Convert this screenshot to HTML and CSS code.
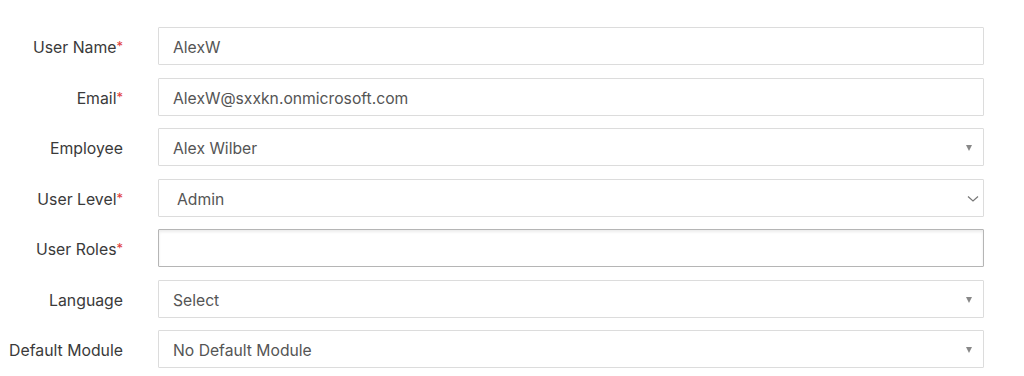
FILE: index.html
```html
<!DOCTYPE html>
<html>
<head>
<meta charset="utf-8">
<link rel="stylesheet" href="styles.css">
</head>
<body>
<form class="form">
  <div class="row">
    <label class="label">User Name<span class="req">*</span></label>
    <div class="field"><span class="value">AlexW</span></div>
  </div>
  <div class="row">
    <label class="label">Email<span class="req">*</span></label>
    <div class="field"><span class="value">AlexW@sxxkn.onmicrosoft.com</span></div>
  </div>
  <div class="row">
    <label class="label">Employee</label>
    <div class="field select"><span class="value">Alex Wilber</span><span class="caret"></span></div>
  </div>
  <div class="row">
    <label class="label">User Level<span class="req">*</span></label>
    <div class="field native"><span class="value">Admin</span>
      <svg class="chev" width="12" height="8" viewBox="0 0 12 8"><path d="M1 1.5 L6 6 L11 1.5" fill="none" stroke="#777" stroke-width="1.2"/></svg>
    </div>
  </div>
  <div class="row">
    <label class="label">User Roles<span class="req">*</span></label>
    <div class="field roles"></div>
  </div>
  <div class="row">
    <label class="label">Language</label>
    <div class="field select"><span class="value">Select</span><span class="caret"></span></div>
  </div>
  <div class="row">
    <label class="label">Default Module</label>
    <div class="field select"><span class="value">No Default Module</span><span class="caret"></span></div>
  </div>
</form>
</body>
</html>
```
FILE: styles.css
```css
html, body {
  margin: 0;
  background: #fff;
}
body {
  padding: 27px 0 0 8px;
  font-family: Inter, "Liberation Sans", sans-serif;
  -webkit-font-smoothing: antialiased;
}
.form {
  display: flex;
  flex-direction: column;
  gap: 12.5px;
  width: 976px;
}
.row {
  display: flex;
  align-items: center;
  gap: 35px;
}
.label {
  width: 115px;
  text-align: right;
  font-size: 15.8px;
  color: #3a3a3a;
  white-space: nowrap;
  padding-top: 3px;
}
.req {
  color: #e03a3a;
  font-size: 13px;
  vertical-align: 2px;
}
.field {
  flex: 0 0 826px;
  height: 38px;
  box-sizing: border-box;
  border: 1px solid #dcdcdc;
  border-radius: 1px;
  display: flex;
  align-items: center;
  padding: 3px 14px 0;
  font-size: 15.7px;
  color: #555;
  position: relative;
}
.native {
  padding-left: 18px;
}
.roles {
  border: 1px solid #b5b5b5;
  box-shadow: inset 0 2px 3px rgba(0,0,0,0.08);
}
.caret {
  position: absolute;
  right: 11px;
  top: 16px;
  width: 0;
  height: 0;
  border-left: 3.5px solid transparent;
  border-right: 3.5px solid transparent;
  border-top: 6px solid #888;
}
.chev {
  position: absolute;
  right: 4px;
  top: 15px;
}
```
